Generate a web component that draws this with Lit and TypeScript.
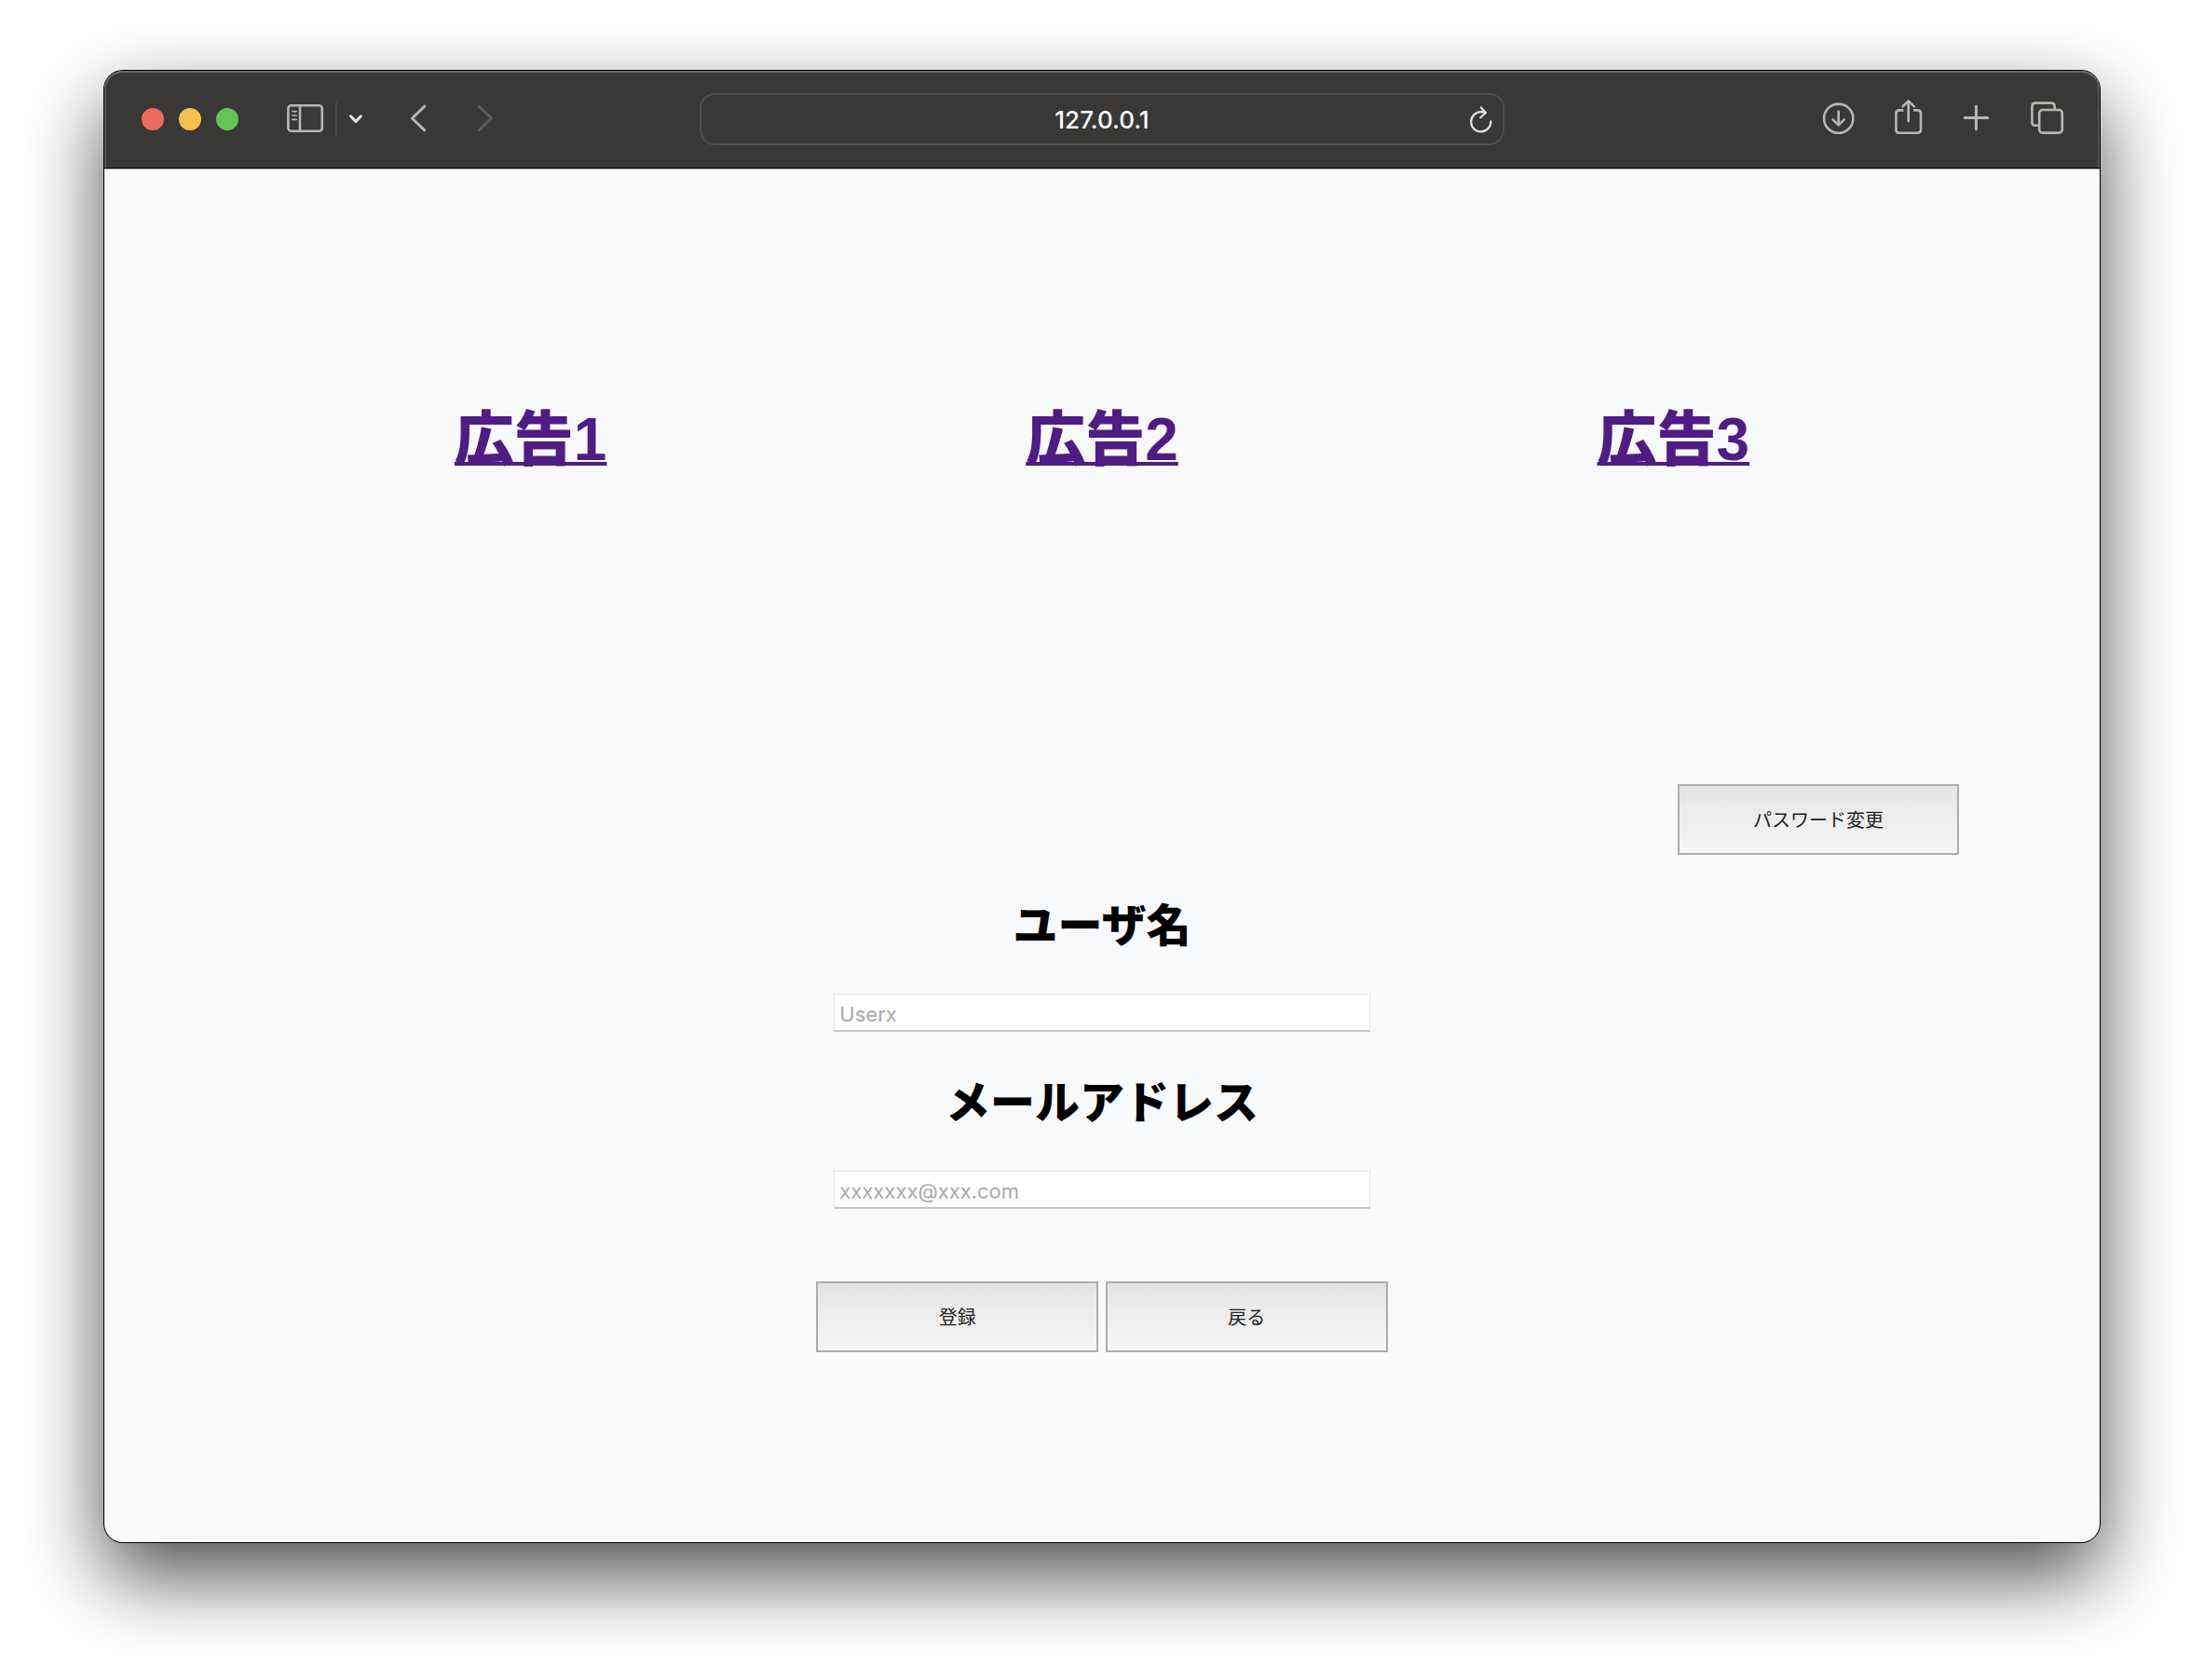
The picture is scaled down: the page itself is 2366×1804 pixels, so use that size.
import { LitElement, html, css, svg } from "lit";
import { customElement, property } from "lit/decorators.js";

const icon = (width: number, body: unknown) => html`
  <svg width=${width} height="44" viewBox="0 0 ${width} 44" aria-hidden="true">${body}</svg>
`;

@customElement("browser-toolbar")
export class BrowserToolbar extends LitElement {
  @property() address = "";

  static styles = css`
    :host {
      display: grid;
      grid-template-columns: 639fr 864fr 639fr;
      align-items: center;
      height: 104px;
      background: #393836;
      border-bottom: 1px solid #000;
      box-shadow: inset 0 2px 0 #6b6a68, inset 2px 0 0 #565553, inset -2px 0 0 #565553;
      border-radius: 20px 20px 0 0;
    }
    button {
      appearance: none;
      border: 0;
      padding: 0;
      margin: 0;
      background: none;
      color: inherit;
      display: block;
      flex: none;
    }
    svg {
      display: block;
      fill: none;
      stroke: currentColor;
      stroke-width: 2.6;
      stroke-linecap: round;
      stroke-linejoin: round;
    }
    .left,
    .right {
      display: flex;
      align-items: center;
      color: #b7b6b5;
    }
    .left {
      padding-left: 40px;
    }
    .right {
      justify-content: flex-end;
      gap: 43px;
      padding-right: 38px;
    }
    .lights {
      display: flex;
      gap: 16px;
      margin-right: 52px;
    }
    .light {
      width: 24px;
      height: 24px;
      border-radius: 50%;
    }
    .close {
      background: #ed6a5f;
    }
    .minimize {
      background: #f5bf4f;
    }
    .zoom {
      background: #62c655;
    }
    .divider {
      width: 2px;
      height: 36px;
      margin: 0 12px;
      background: #4a4947;
    }
    .menu {
      color: #e8e8e7;
      margin-right: 50px;
    }
    .forward {
      color: #5d5c5a;
      margin-left: 54px;
    }
    .field {
      display: grid;
      grid-template-columns: 48px 1fr 48px;
      align-items: center;
      height: 56px;
      box-sizing: border-box;
      border: 2px solid #4f4e4c;
      border-radius: 16px;
      color: #e3e3e2;
    }
    .address {
      grid-column: 2;
      min-width: 0;
      border: 0;
      padding: 2px 0 0;
      background: none;
      outline: none;
      color: #fff;
      text-align: center;
      font: 500 26px/32px Inter, "Noto Sans CJK JP", sans-serif;
    }
    .reload {
      justify-self: center;
    }
  `;

  render() {
    return html`
      <div class="left">
        <div class="lights">
          <button class="light close" aria-label="閉じる"></button>
          <button class="light minimize" aria-label="しまう"></button>
          <button class="light zoom" aria-label="拡大"></button>
        </div>
        <button aria-label="サイドバー">
          ${icon(40, svg`
            <rect x="1.4" y="7.2" width="36.4" height="27.6" rx="3.4"></rect>
            <path d="M14 7.5V34.5"></path>
            <path d="M5.8 13.6h4.4M5.8 18h4.4M5.8 22.4h4.4" stroke-width="1.6"></path>`)}
        </button>
        <span class="divider"></span>
        <button class="menu" aria-label="タブグループ">
          ${icon(16, svg`<path d="M2.5 18.8L8 24.4L13.5 18.8" stroke-width="3"></path>`)}
        </button>
        <button aria-label="戻る">
          ${icon(18, svg`<path d="M15.8 8.2L2.4 21L15.8 33.8" stroke-width="3"></path>`)}
        </button>
        <button class="forward" aria-label="進む" disabled>
          ${icon(18, svg`<path d="M2.2 8.2L15.6 21L2.2 33.8" stroke-width="3"></path>`)}
        </button>
      </div>
      <div class="field">
        <input class="address" type="text" aria-label="アドレス" .value=${this.address} />
        <button class="reload" aria-label="再読み込み">
          ${icon(28, svg`
            <path d="M25.400 24.400A10.600 10.600 0 1 1 14.800 14.200Q17.400 14.200 19.600 15" stroke-width="2.2"></path>
            <path d="M14.800 9.400L20 15L14.200 20.200" stroke-width="2.2"></path>`)}
        </button>
      </div>
      <div class="right">
        <button aria-label="ダウンロード">
          ${icon(36, svg`
            <circle cx="18.700" cy="21.200" r="15.600"></circle>
            <path d="M18.700 13.700V28M12.600 22.400L18.700 28.400L24.800 22.400"></path>`)}
        </button>
        <button aria-label="共有">
          ${icon(30, svg`
            <path d="M9.400 12.400H4.800Q1.400 12.400 1.400 15.800V33.300Q1.400 36.700 4.800 36.700H24.600Q28 36.700 28 33.300V15.800Q28 12.400 24.600 12.400H20" stroke-linecap="butt"></path>
            <path d="M14.700 24V2.600M8.600 8.400L14.700 2.400L20.800 8.400"></path>`)}
        </button>
        <button aria-label="新規タブ">
          ${icon(30, svg`<path d="M14.400 8.200V32.800M2.200 20.500H26.800" stroke-width="3"></path>`)}
        </button>
        <button aria-label="タブ一覧">
          ${icon(36, svg`
            <path d="M8.600 28.800H4.800Q1.400 28.800 1.400 25.400V8Q1.400 4.600 4.800 4.600H22.200Q25.600 4.600 25.600 8V11.600" stroke-linecap="butt"></path>
            <rect x="9.200" y="12" width="24.600" height="24.600" rx="3.600"></rect>`)}
        </button>
      </div>
    `;
  }
}

@customElement("app-root")
export class AppRoot extends LitElement {
  static styles = css`
    :host {
      display: flex;
      box-sizing: border-box;
      min-height: 100vh;
      padding: 76px 112px 148px;
      background: #fff;
      overflow: hidden;
      font-family: "Liberation Sans", "Noto Sans CJK JP", sans-serif;
    }
    .window {
      flex: 1;
      min-width: 0;
      display: flex;
      flex-direction: column;
      border-radius: 20px;
      background: #f8f9fb;
      box-shadow: 0 0 0 1px #000, 0 36px 86px rgba(0, 0, 0, 0.7);
    }
    .page {
      border-top: 1px solid #b9babb;
      padding: 0 151px;
      display: grid;
      grid-template-columns: repeat(3, 1fr);
    }
    .ads {
      display: contents;
    }
    .ad {
      margin: 0;
      padding: 242px 0 322px;
      text-align: center;
      font-size: 64px;
      line-height: 96px;
      font-weight: 900;
    }
    .ad a {
      color: #4f1c86;
      text-decoration: underline;
      text-decoration-skip-ink: none;
      text-decoration-thickness: 4px;
      text-underline-offset: 2px;
    }
    .account {
      grid-column: 3;
      display: flex;
      justify-content: flex-end;
    }
    .profile {
      grid-column: 2;
      display: flex;
      flex-direction: column;
      align-items: center;
      padding-top: 41px;
    }
    .label {
      font-size: 48px;
      line-height: 72px;
      font-weight: 900;
      color: #000;
      white-space: nowrap;
    }
    .input {
      box-sizing: border-box;
      align-self: stretch;
      height: 41px;
      margin: 36px 19px 41px;
      padding: 3px 5px 0;
      border: 1px solid #e4e5e7;
      border-bottom: 2px solid #c3c5c8;
      border-radius: 0;
      background: #fff;
      outline: none;
      font: 400 22px/32px Inter, "Noto Sans CJK JP", sans-serif;
    }
    .input::placeholder {
      color: #a9a9a9;
      opacity: 1;
    }
    .actions {
      display: flex;
      gap: 8px;
      width: 100%;
      padding-top: 37px;
    }
    .button {
      box-sizing: border-box;
      height: 76px;
      padding: 0;
      border: 2px solid #acadaf;
      border-radius: 0;
      background: linear-gradient(#e3e3e3, #ececec 40%, #f6f6f6);
      color: #222;
      font: 400 20px/30px "Noto Sans CJK JP", sans-serif;
    }
    .account .button {
      width: 302px;
    }
    .actions .button {
      flex: 1;
    }
  `;

  private ads = ["広告1", "広告2", "広告3"];

  private fields = [
    { id: "username", label: "ユーザ名", type: "text", placeholder: "Userx" },
    { id: "email", label: "メールアドレス", type: "email", placeholder: "xxxxxxx@xxx.com" },
  ];

  render() {
    return html`
      <div class="window">
        <browser-toolbar address="127.0.0.1"></browser-toolbar>
        <main class="page">
          <section class="ads">
            ${this.ads.map((ad) => html`<h1 class="ad"><a href="#">${ad}</a></h1>`)}
          </section>
          <div class="account">
            <button class="button" type="button">パスワード変更</button>
          </div>
          <form class="profile">
            ${this.fields.map(
              (f) => html`
                <label class="label" for=${f.id}>${f.label}</label>
                <input class="input" id=${f.id} type=${f.type} placeholder=${f.placeholder} />
              `
            )}
            <div class="actions">
              <button class="button" type="button">登録</button>
              <button class="button" type="button">戻る</button>
            </div>
          </form>
        </main>
      </div>
    `;
  }
}
